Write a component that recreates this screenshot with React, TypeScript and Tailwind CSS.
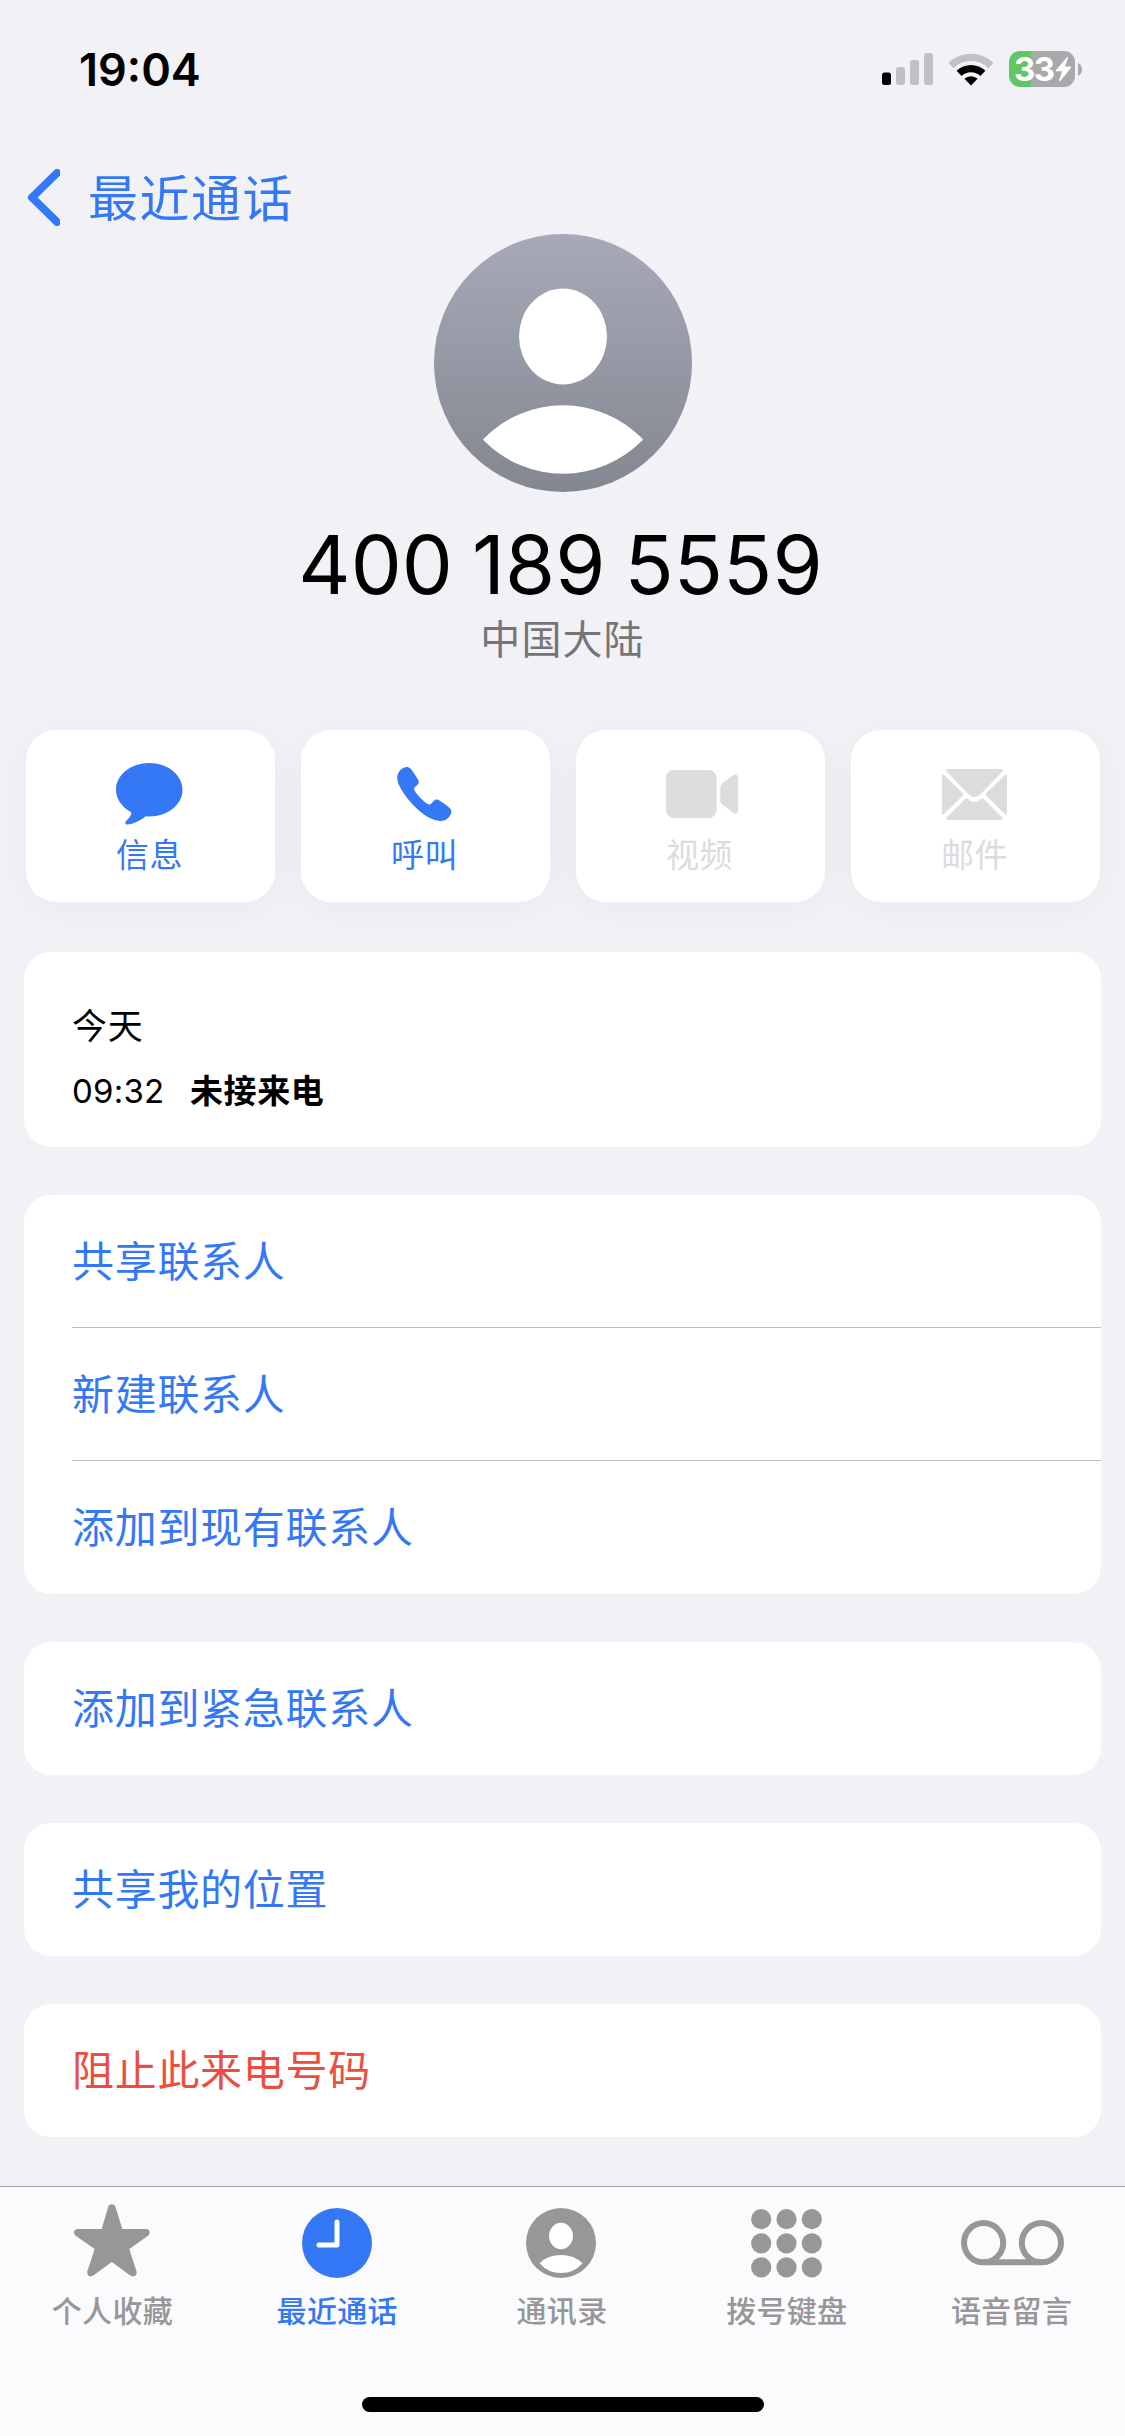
import type { ReactNode } from 'react';

const sans = "font-['Inter','Noto_Sans_CJK_SC',sans-serif]";

function StatusBar() {
  return (
    <div className="flex h-[138px] items-center justify-between pl-[79px] pr-[43px]">
      <span className="text-[45px] leading-none font-semibold">19:04</span>
      <div className="flex h-9 items-center">
        <svg width="51" height="32" viewBox="0 0 51 32" className="mr-[15px]">
          <rect x="0" y="19.5" width="9" height="12.5" rx="2.5" fill="#000" />
          <rect x="14" y="14" width="9" height="18" rx="2.5" fill="#c1c0c6" />
          <rect x="28" y="7" width="9" height="25" rx="2.5" fill="#c1c0c6" />
          <rect x="42" y="0" width="9" height="32" rx="2.5" fill="#c1c0c6" />
        </svg>
        <svg width="46" height="33" viewBox="0 0 46 33" className="mr-[15px]">
          <path d="M0.6 9.8A32 32 0 0 1 45.4 9.8L40.4 15.2A24.6 24.6 0 0 0 5.6 15.2Z" fill="#c1c0c6" />
          <path d="M8.6 17.7A20.8 20.8 0 0 1 37.4 17.7L32.4 22.9A13.6 13.6 0 0 0 13.6 22.9Z" fill="#000" />
          <path d="M16.4 25.8A9.6 9.6 0 0 1 29.6 25.8L23 32.6Z" fill="#000" />
        </svg>
        <div className="flex h-9 w-[66px] items-center rounded-[11px] bg-[linear-gradient(to_right,#61c765_22px,#a9a9ad_22px)] pl-[5px]">
          <span className="text-[33px] leading-9 font-bold tracking-[-1.5px] text-white">33</span>
          <svg width="17" height="26" viewBox="0 0 17 26" className="ml-px shrink-0">
            <path d="M12 1.2L0.8 14.2Q0.2 15.2 1.3 15.2H7L4 24.4Q4.1 25.8 5.3 24.9L16 11.7Q16.6 10.6 15.4 10.6H9.8L13.2 1.8Q13.2 0.4 12 1.2Z" fill="#fff" />
          </svg>
        </div>
        <svg width="4" height="13" viewBox="0 0 4 13" className="ml-[3px]">
          <path d="M0 0Q4 2 4 6.5T0 13Z" fill="#a9a9ad" />
        </svg>
      </div>
    </div>
  );
}

function Avatar() {
  return (
    <svg width="258" height="258" viewBox="0 0 258 258">
      <defs>
        <linearGradient id="avatar" x1="0" y1="0" x2="0" y2="1">
          <stop offset="0" stopColor="#a6aab8" />
          <stop offset="1" stopColor="#838790" />
        </linearGradient>
      </defs>
      <circle cx="129" cy="129" r="129" fill="url(#avatar)" />
      <ellipse cx="129" cy="102.5" rx="44" ry="48" fill="#fff" />
      <path d="M49.8 204.5A111 111 0 0 1 208.2 204.5Q209.2 205.5 208.2 206.5A111 111 0 0 1 49.8 206.5Q48.8 205.5 49.8 204.5Z" fill="#fff" />
    </svg>
  );
}

const MessageIcon = () => (
  <svg width="67" height="62" viewBox="0 0 67 62" fill="currentColor">
    <path d="M33.3 0C51.7 0 66.5 11.8 66.5 26.8S51.7 53.5 33.3 53.5Q31.5 53.5 29.9 53.3C25.5 56.8 18 61.2 12 61.4C8.9 61.4 8.8 59.3 10.1 57.9C12.5 55.6 14.6 53.5 15.3 50.8C15.6 49.6 15 49.2 14.3 48.7C5.5 43.8 0 35.5 0 26.8C0 11.8 14.9 0 33.3 0Z" />
  </svg>
);

const PhoneIcon = () => (
  <svg width="55" height="56" viewBox="0 0 55 56" fill="currentColor">
    <path d="M4 3.6C7.2 0.6 11 -0.2 13.7 2.7C15.8 5.1 18.8 10 21 13.6C22.5 16.2 21.6 17.6 20 19.3L17.7 21.2Q16.6 22.3 17.3 23.9C18.8 27.4 26.9 36 31.3 38.2Q32.9 38.9 34 37.8L36.2 35.4C38.2 33.5 39.6 32.9 42.1 34.3C45.4 36.3 49.7 39.4 52.7 41.9C55.5 44.3 54.6 48.4 51.7 51.5C47.6 55.9 41.6 55.9 34.5 52.8C21.5 47 6.2 29.3 1.4 17.7C-0.8 12.1 0.2 6.9 4 3.6Z" />
  </svg>
);

const VideoIcon = () => (
  <svg width="73" height="48" viewBox="0 0 73 48" fill="currentColor" className="ml-[6px]">
    <rect width="50.5" height="48" rx="8" />
    <path d="M54.3 17.5Q54.3 15.3 56 13.8L66.6 5.4Q68.5 4 70.4 4.8Q72.2 5.6 72.2 8V40Q72.2 42.3 70.4 43.2Q68.5 44 66.6 42.5L56 34.2Q54.3 32.7 54.3 30.6Z" />
  </svg>
);

const MailIcon = () => (
  <svg width="65" height="51" viewBox="0 0 65 51" fill="currentColor">
    <path d="M3.2 1Q4.5 0 7 0H58Q60.5 0 61.8 1L38.5 25.3Q32.5 31.2 26.5 25.3Z" />
    <path d="M0.5 5.5Q1 5 1.5 5.5L20.5 24Q22 25.5 20.5 27L1.5 45.5Q0 46.5 0 44V8Q0 6 0.5 5.5Z" />
    <path d="M64.5 5.5Q64 5 63.5 5.5L44.5 24Q43 25.5 44.5 27L63.5 45.5Q65 46.5 65 44V8Q65 6 64.5 5.5Z" />
    <path d="M3.5 49.8L23.7 29.5Q24.7 28.8 25.7 29.7Q32.5 36.5 39.3 29.7Q40.3 28.8 41.3 29.5L61.5 49.8Q60 51 58 51H7Q5 51 3.5 49.8Z" />
  </svg>
);

const actions: { label: string; icon: ReactNode; disabled?: boolean }[] = [
  { label: '信息', icon: <MessageIcon /> },
  { label: '呼叫', icon: <PhoneIcon /> },
  { label: '视频', icon: <VideoIcon />, disabled: true },
  { label: '邮件', icon: <MailIcon />, disabled: true },
];

const groups: { items: string[]; danger?: boolean }[] = [
  { items: ['共享联系人', '新建联系人', '添加到现有联系人'] },
  { items: ['添加到紧急联系人'] },
  { items: ['共享我的位置'] },
  { items: ['阻止此来电号码'], danger: true },
];

const StarIcon = () => (
  <svg width="76" height="78" viewBox="0 0 76 78" fill="currentColor">
    <path d="M27.7 25L34 3.5Q35 0.2 37.8 0.2T41.7 3.5L48.3 25H72.2Q75.5 25.3 75.7 28.5Q75.7 30.5 74 31.8L55.3 45L62.6 67.8Q63 72 59 72.4Q57.5 72.4 56.3 71.6L37.8 58L19.3 71.6Q18 72.4 16.6 72.4Q13 72 13.2 67.8L20.7 45L1.7 31.8Q0 30.5 0 28.5Q0.2 25.3 3.5 25Z" />
  </svg>
);

const ClockIcon = () => (
  <svg width="70" height="70" viewBox="0 0 70 70">
    <circle cx="35" cy="35" r="35" fill="currentColor" />
    <path d="M35 14V37H17" fill="none" stroke="#fff" strokeWidth="5" strokeLinecap="round" strokeLinejoin="round" />
  </svg>
);

const ContactIcon = () => (
  <svg width="70" height="70" viewBox="0 0 70 70">
    <circle cx="35" cy="35" r="35" fill="currentColor" />
    <ellipse cx="35" cy="28" rx="12" ry="13.2" fill="#fff" />
    <path d="M13.5 55.2Q22 47 35 47T56.5 55.2Q48 65 35 65T13.5 55.2Z" fill="#fff" />
  </svg>
);

const KeypadIcon = () => (
  <svg width="71" height="69" viewBox="0 0 71 69" fill="currentColor">
    {[10.2, 34.3, 58.4].map((y) =>
      [10.2, 35.5, 60.8].map((x) => <circle key={`${x}-${y}`} cx={x} cy={y} r="10.1" />)
    )}
  </svg>
);

const VoicemailIcon = () => (
  <svg width="103" height="46" viewBox="0 0 103 46" fill="none" stroke="currentColor" strokeWidth="6" className="ml-[2px]">
    <circle cx="22.6" cy="22.7" r="19.6" />
    <circle cx="80.4" cy="22.7" r="19.6" />
    <path d="M22.6 42.3H80.4" />
  </svg>
);

const tabs: { label: string; icon: ReactNode; active?: boolean }[] = [
  { label: '个人收藏', icon: <StarIcon /> },
  { label: '最近通话', icon: <ClockIcon />, active: true },
  { label: '通讯录', icon: <ContactIcon /> },
  { label: '拨号键盘', icon: <KeypadIcon /> },
  { label: '语音留言', icon: <VoicemailIcon /> },
];

export default function App() {
  return (
    <div className={`flex h-[2436px] w-[1125px] flex-col overflow-hidden bg-[#f1f1f6] text-black ${sans}`}>
      <StatusBar />

      <header className="flex h-24 items-start pl-[27px] pt-[31px]">
        <svg width="33" height="57" viewBox="0 0 33 57" fill="none" stroke="#3478f6" strokeWidth="8" strokeLinecap="round" strokeLinejoin="round">
          <path d="M30 4L5 28.5L30 53" />
        </svg>
        <span className="ml-7 mt-px text-[50px] leading-[58px] tracking-[1.5px] text-[#3478f6]">最近通话</span>
      </header>

      <section className="flex h-[496px] flex-col items-center">
        <Avatar />
        <h1 className="mt-[25px] mr-[4px] text-[81px] leading-[96px] tracking-[0.1px] [word-spacing:-4px]">400 189 5559</h1>
        <p className="mt-[2px] text-[40px] leading-[50px] tracking-[1.1px] text-[#757578]">中国大陆</p>
      </section>

      <section className="grid h-[172px] grid-cols-4 gap-[26px] px-[25.5px]">
        {actions.map(({ label, icon, disabled }) => (
          <button
            key={label}
            className={`flex flex-col items-center rounded-[30px] bg-white shadow-[0_6px_40px_rgba(0,0,0,0.04)] ${
              disabled ? 'text-[#dcdcde]' : 'text-[#3478f6]'
            }`}
          >
            <span className="mt-[27px] mr-[2px] flex h-[74px] items-center justify-center">{icon}</span>
            <span className="mt-px mr-px text-[33px] leading-[46px] tracking-[0.5px]">{label}</span>
          </button>
        ))}
      </section>

      <main className="mt-[50px] flex flex-1 flex-col gap-12 px-6">
        <div className="h-[195px] rounded-[27px] bg-white pl-12 pt-[49px]">
          <p className="text-[35px] leading-[50px] tracking-[0.8px]">今天</p>
          <p className="mt-[15px] flex items-center text-[33px] leading-[50px]">
            <span className="w-[118px] tracking-[0.2px]">09:32</span>
            <span className="font-semibold tracking-[0.6px]">未接来电</span>
          </p>
        </div>

        {groups.map(({ items, danger }) => (
          <ul key={items[0]} className="rounded-[27px] bg-white pl-12">
            {items.map((item, i) => (
              <li
                key={item}
                className={`flex h-[133px] items-center text-[42px] tracking-[0.7px] ${
                  i < items.length - 1 ? 'border-b border-[#bdbdc0]' : ''
                } ${danger ? 'text-[#eb4e3d]' : 'text-[#3478f6]'}`}
              >
                {item}
              </li>
            ))}
          </ul>
        ))}
      </main>

      <nav className="flex h-[250px] flex-col items-center border-t border-[#a2a2a6] bg-[#fbfbfd]">
        <div className="grid w-full grid-cols-5 pr-px">
          {tabs.map(({ label, icon, active }) => (
            <div key={label} className={`flex flex-col items-center ${active ? 'text-[#3478f6]' : 'text-[#979799]'}`}>
              <span className="mt-4 mr-px flex h-20 items-center">{icon}</span>
              <span className="mt-2 text-[30px] leading-10 font-medium tracking-[0.3px]">{label}</span>
            </div>
          ))}
        </div>
        <div className="mt-[66px] h-[15px] w-[402px] rounded-full bg-black" />
      </nav>
    </div>
  );
}
